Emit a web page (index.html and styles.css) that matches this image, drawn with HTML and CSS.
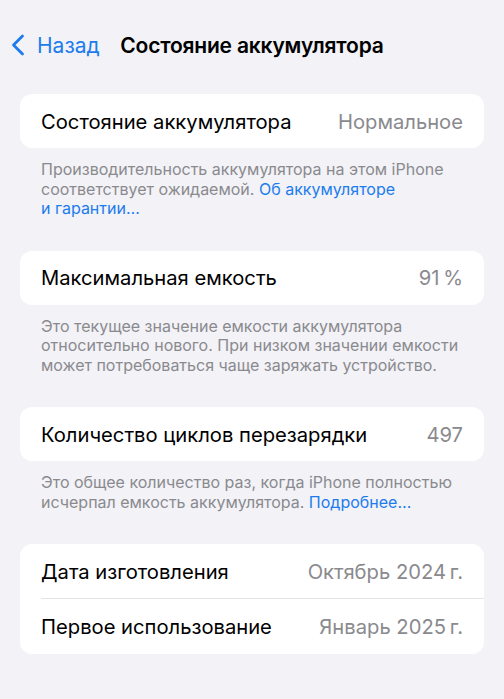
FILE: index.html
```html
<!DOCTYPE html>
<html lang="ru">
<head>
    <meta charset="UTF-8">
    <title>Состояние аккумулятора</title>
    <link rel="stylesheet" href="styles.css">
</head>
<body>
    <header class="nav">
        <a class="nav-back" href="#">
            <svg class="chevron" width="14" height="22" viewBox="0 0 14 22">
                <path d="M11.5 2 L2.5 11 L11.5 20" fill="none" stroke="currentColor" stroke-width="2.8" stroke-linecap="round" stroke-linejoin="round"/>
            </svg>
            <span>Назад</span>
        </a>
        <h1 class="nav-title">Состояние аккумулятора</h1>
        <div></div>
    </header>

    <main class="content">
        <section class="group">
            <div class="card">
                <div class="row">
                    <span class="label">Состояние аккумулятора</span>
                    <span class="value">Нормальное</span>
                </div>
            </div>
            <p class="note">Производительность аккумулятора на этом iPhone соответствует ожидаемой. <a href="#">Об аккумуляторе и&nbsp;гарантии…</a></p>
        </section>

        <section class="group">
            <div class="card">
                <div class="row">
                    <span class="label">Максимальная емкость</span>
                    <span class="value">91&thinsp;%</span>
                </div>
            </div>
            <p class="note">Это текущее значение емкости аккумулятора относительно нового. При низком значении емкости может потребоваться чаще заряжать устройство.</p>
        </section>

        <section class="group">
            <div class="card">
                <div class="row">
                    <span class="label">Количество циклов перезарядки</span>
                    <span class="value">497</span>
                </div>
            </div>
            <p class="note">Это общее количество раз, когда iPhone полностью исчерпал емкость аккумулятора. <a href="#">Подробнее…</a></p>
        </section>

        <section class="group">
            <div class="card">
                <div class="row">
                    <span class="label">Дата изготовления</span>
                    <span class="value">Октябрь 2024&thinsp;г.</span>
                </div>
                <div class="row">
                    <span class="label">Первое использование</span>
                    <span class="value">Январь 2025&thinsp;г.</span>
                </div>
            </div>
        </section>
    </main>
</body>
</html>
```

FILE: styles.css
```css
body {
    margin: 0;
    background: #f2f2f7;
    font-family: Inter, "Noto Sans", sans-serif;
    color: #000;
    -webkit-font-smoothing: antialiased;
}
a {
    color: #1c7ced;
    text-decoration: none;
}

/* top bar */
.nav {
    display: grid;
    grid-template-columns: 1fr auto 1fr;
    align-items: center;
    height: 50px;
    padding: 20px 0 0;
}
.nav-back {
    display: flex;
    align-items: center;
    gap: 12px;
    padding-left: 11px;
    font-size: 21px;
}
.nav-title {
    margin: 0;
    font-size: 21px;
    font-weight: 600;
    letter-spacing: -0.2px;
}

/* grouped list */
.content {
    padding: 24px 20px 0;
}
.group {
    margin-bottom: 32px;
}
.card {
    background: #fff;
    border-radius: 12px;
    overflow: hidden;
}
.row {
    display: flex;
    justify-content: space-between;
    align-items: center;
    height: 54px;
    margin-left: 21px;
    padding-right: 21px;
    font-size: 20.2px;
}
.row + .row {
    border-top: 1px solid #e3e3e8;
    height: 55px;
}
.value {
    color: #8a8a8e;
}
.note {
    margin: 12px 0 0;
    padding: 0 21px;
    font-size: 16px;
    line-height: 19.5px;
    color: #8a8a8e;
}
```
